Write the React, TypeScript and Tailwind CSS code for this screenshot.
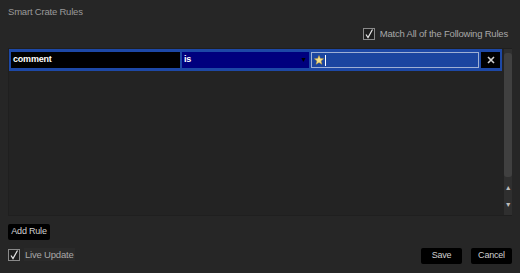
import React from 'react';

function Check({ className = '' }: { className?: string }) {
  return (
    <span className={`flex h-[12px] w-[12px] items-center justify-center border border-[#8a8a8a] bg-[#1e1e1e] ${className}`}>
      <svg width="10" height="10" viewBox="0 0 10 10" fill="none">
        <path d="M2 5.5 L4 8.5 L8.5 0.5" stroke="#e8e8e8" strokeWidth="1.2" />
      </svg>
    </span>
  );
}

export default function App() {
  return (
    <div
      className="flex h-[273px] w-[520px] flex-col bg-[#262626] text-[9.5px] tracking-[-0.2px] text-[#a8a8a8]"
      style={{ fontFamily: '"Liberation Sans", Arial, sans-serif' }}
    >
      <div className="pl-[8px] pt-[6px] leading-[12px] text-[#9a9a9a]">Smart Crate Rules</div>

      <div className="mt-[10px] flex items-center justify-end gap-[5px] pr-[12px]">
        <Check />
        <span className="leading-[12px]">Match All of the Following Rules</span>
      </div>

      <div className="mx-[8px] mt-[8px] flex h-[168px] border border-[#1f1f1f] bg-[#232323]">
        <div className="flex-1">
          <div className="flex h-[22px] items-center gap-[2px] bg-[#1d48a6] px-[2px]">
            <div className="flex h-[16px] w-[169px] items-center bg-black pl-[2px] font-bold text-[9px] text-white">
              comment
            </div>
            <div className="flex h-[16px] w-[127px] items-center justify-between bg-[#00007e] px-[2px] font-bold text-[9px] text-white">
              <span>is</span>
              <span className="text-[7px] text-black">▼</span>
            </div>
            <div className="flex h-[16px] w-[168px] items-center border border-[#9fb0d4] bg-[#1b45a0] pl-[2px]">
              <svg width="10" height="10" viewBox="0 0 10 10">
                <path d="M5 0.5 L6.3 3.6 L9.6 3.8 L7 5.9 L7.9 9.3 L5 7.4 L2.1 9.3 L3 5.9 L0.4 3.8 L3.7 3.6 Z" fill="#f3e08a" stroke="#c9a33a" strokeWidth="0.5" />
              </svg>
              <span className="ml-[1px] h-[11px] w-[1px] bg-white" />
            </div>
            <div className="flex h-[16px] w-[19px] items-center justify-center bg-black">
              <svg width="8" height="8" viewBox="0 0 8 8">
                <path d="M1 1 L7 7 M7 1 L1 7" stroke="#d0d0d0" strokeWidth="1.6" />
              </svg>
            </div>
          </div>
        </div>
        <div className="ml-[2px] flex w-[10px] flex-col items-center bg-[#2f2f2f] pb-[3px]">
          <div className="mt-[4px] h-[124px] w-[8px] rounded-[3px] bg-[#404040]" />
          <span className="mt-[7px] text-[7px] leading-[8px] text-[#bbbbbb]">▲</span>
          <span className="mt-[9px] text-[7px] leading-[8px] text-[#bbbbbb]">▼</span>
        </div>
      </div>

      <div className="mt-[8px] pl-[8px]">
        <div className="flex h-[16px] w-[42px] items-center justify-center rounded-[2px] bg-black text-[9px] text-[#d0d0d0]">
          Add Rule
        </div>
      </div>

      <div className="mt-[8px] flex items-start justify-between pl-[8px] pr-[8px]">
        <div className="flex items-center gap-[4px]">
          <Check />
          <span className="bg-[#2a2a2a] px-[1px] leading-[13px]">Live Update</span>
        </div>
        <div className="flex gap-[9px]">
          <div className="flex h-[16px] w-[41px] items-center justify-center rounded-[2px] bg-black text-[9px] text-[#d0d0d0]">
            Save
          </div>
          <div className="flex h-[16px] w-[41px] items-center justify-center rounded-[2px] bg-black text-[9px] text-[#d0d0d0]">
            Cancel
          </div>
        </div>
      </div>
    </div>
  );
}
